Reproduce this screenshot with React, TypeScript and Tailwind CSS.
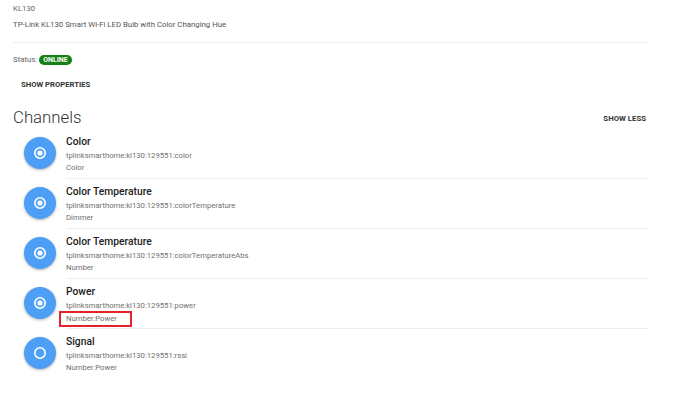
import * as React from 'react';

type Channel = {
  label: string;
  uid: string;
  type: string;
  linked: boolean;
  marked?: boolean;
};

const channels: Channel[] = [
  { label: 'Color', uid: 'tplinksmarthome:kl130:129551:color', type: 'Color', linked: true },
  { label: 'Color Temperature', uid: 'tplinksmarthome:kl130:129551:colorTemperature', type: 'Dimmer', linked: true },
  { label: 'Color Temperature', uid: 'tplinksmarthome:kl130:129551:colorTemperatureAbs', type: 'Number', linked: true },
  { label: 'Power', uid: 'tplinksmarthome:kl130:129551:power', type: 'Number:Power', linked: true, marked: true },
  { label: 'Signal', uid: 'tplinksmarthome:kl130:129551:rssi', type: 'Number:Power', linked: false },
];

function ChannelIcon({ linked }: { linked: boolean }) {
  return (
    <div className="flex h-[32px] w-[32px] shrink-0 items-center justify-center rounded-full bg-[#4d9ff6] shadow-[0_1px_3px_rgba(0,0,0,0.3)]">
      <svg width="14" height="14" viewBox="0 0 14 14">
        <circle cx="7" cy="7" r="5.2" fill="none" stroke="#fff" strokeWidth="1.6" />
        {linked && <circle cx="7" cy="7" r="2.6" fill="#fff" />}
      </svg>
    </div>
  );
}

function ChannelRow({ ch, last }: { ch: Channel; last: boolean }) {
  return (
    <div className="flex h-[50px] items-start">
      <div className="flex w-[53px] justify-center pt-[8px]">
        <ChannelIcon linked={ch.linked} />
      </div>
      <div
        className={
          last
            ? 'flex h-full flex-1 flex-col pt-[6px]'
            : 'flex h-full flex-1 flex-col border-b border-[#eeeeee] pt-[6px]'
        }
      >
        <div className="text-[10.3px] font-medium leading-[14px] text-[#222]">{ch.label}</div>
        <div className="mt-[1px] text-[7.7px] leading-[12px] text-[#707070]">{ch.uid}</div>
        <div className="text-[7.7px] leading-[12px] text-[#707070]">
          {ch.marked ? (
            <span className="-ml-[7px] -mt-[1px] inline-block h-[16px] w-[73px] border-2 border-solid border-[#e3242b] pl-[5px] leading-[12px]">
              {ch.type}
            </span>
          ) : (
            ch.type
          )}
        </div>
      </div>
    </div>
  );
}

export default function App() {
  return (
    <div className="h-[413px] w-[690px] overflow-hidden bg-white font-['Roboto',sans-serif] text-[#555]">
      <div className="w-[649px] pl-[13px]">
        <div className="pt-[3px] text-[7.8px] leading-[12px] text-[#666]">KL130</div>
        <div className="mt-[4px] text-[7.8px] leading-[12px] text-[#555]">
          TP-Link KL130 Smart Wi-Fi LED Bulb with Color Changing Hue
        </div>
        <div className="mt-[11px] border-b border-[#eeeeee]" />

        <div className="mt-[11px] flex items-center gap-[2px] text-[7.8px] leading-[12px] text-[#666]">
          <span>Status:</span>
          <span className="rounded-full bg-[#167f16] px-[4px] text-[7px] font-bold leading-[10px] text-white">
            ONLINE
          </span>
        </div>
        <div className="mt-[13px] pl-[8px] text-[7.7px] font-bold leading-[12px] text-[#333]">
          SHOW PROPERTIES
        </div>

        <div className="mt-[15px] flex items-end justify-between">
          <h2 className="text-[16.8px] font-light leading-[22px] text-[#333]">Channels</h2>
          <span className="pb-[3px] pr-[3px] text-[7.8px] font-bold leading-[12px] text-[#333]">SHOW LESS</span>
        </div>

        <div className="mt-[1px]">
          {channels.map((ch, i) => (
            <ChannelRow key={i} ch={ch} last={i === channels.length - 1} />
          ))}
        </div>
      </div>
    </div>
  );
}
